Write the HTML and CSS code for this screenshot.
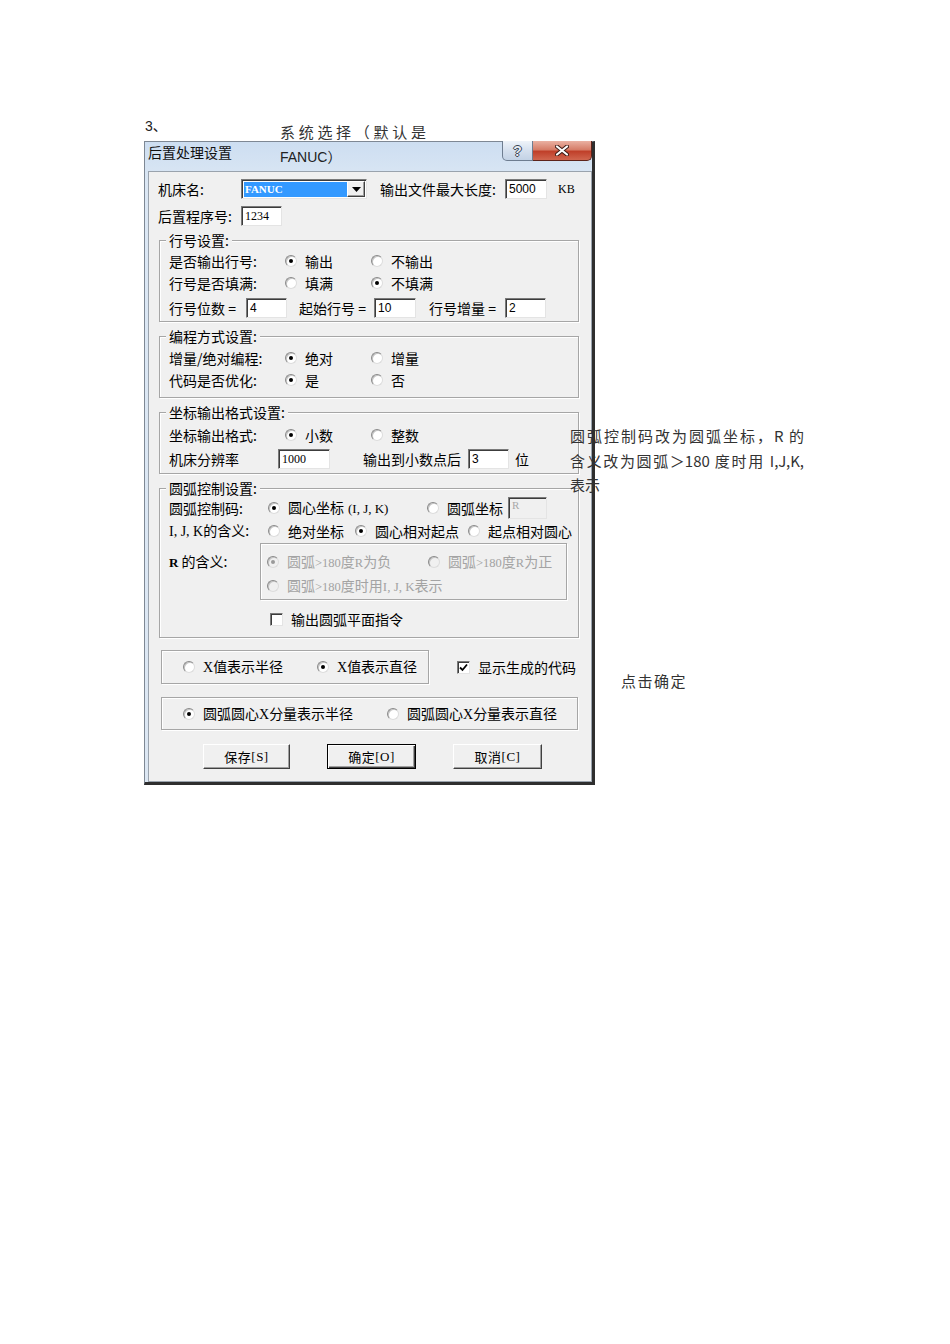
FILE: index.html
```html
<!DOCTYPE html>
<html lang="zh-CN">
<head>
<meta charset="utf-8">
<title>后置处理设置</title>
<link rel="stylesheet" href="styles.css">
</head>
<body>
<div class="doc">
  <div class="intro">
    <span class="num">3、</span>
    <span class="intro-text">系统选择（默认是</span>
  </div>
  <div class="figure">
    <div class="dialog">
      <div class="titlebar">
        <span class="title">后置处理设置</span>
        <div class="caption-btns">
          <span class="cap-help">?</span>
          <span class="cap-close"><svg width="14" height="11" viewBox="0 0 14 11"><path d="M2 1.5 L12 9.5 M12 1.5 L2 9.5" stroke="#3a1a14" stroke-width="4" stroke-linecap="round"/><path d="M2 1.5 L12 9.5 M12 1.5 L2 9.5" stroke="#fff" stroke-width="2.2" stroke-linecap="round"/></svg></span>
        </div>
      </div>
      <div class="client">
        <div class="row row-a">
          <span class="lbl w83">机床名:</span>
          <div class="combo"><span class="combo-sel serif">FANUC</span><span class="combo-btn"><svg width="9" height="5" viewBox="0 0 9 5"><path d="M0 0 H9 L4.5 5 Z" fill="#000"/></svg></span></div>
          <span class="lbl ml13 w125">输出文件最大长度:</span>
          <span class="field w42">5000</span>
          <span class="unit serif">KB</span>
        </div>
        <div class="row row-b">
          <span class="lbl w83">后置程序号:</span>
          <span class="field w41 serif">1234</span>
        </div>

        <div class="group g1">
          <span class="legend">行号设置:</span>
          <div class="row r1">
            <span class="lbl w116">是否输出行号:</span>
            <span class="opt w86"><i class="radio on"></i>输出</span>
            <span class="opt"><i class="radio"></i>不输出</span>
          </div>
          <div class="row r2">
            <span class="lbl w116">行号是否填满:</span>
            <span class="opt w86"><i class="radio"></i>填满</span>
            <span class="opt"><i class="radio on"></i>不填满</span>
          </div>
          <div class="row r3">
            <span class="lbl w77">行号位数 =</span>
            <span class="field w41">4</span>
            <span class="lbl ml12 w75">起始行号 =</span>
            <span class="field w42">10</span>
            <span class="lbl ml13 w76">行号增量 =</span>
            <span class="field w41">2</span>
          </div>
        </div>

        <div class="group g2">
          <span class="legend">编程方式设置:</span>
          <div class="row r1">
            <span class="lbl w116">增量/绝对编程:</span>
            <span class="opt w86"><i class="radio on"></i>绝对</span>
            <span class="opt"><i class="radio"></i>增量</span>
          </div>
          <div class="row r2">
            <span class="lbl w116">代码是否优化:</span>
            <span class="opt w86"><i class="radio on"></i>是</span>
            <span class="opt"><i class="radio"></i>否</span>
          </div>
        </div>

        <div class="group g3">
          <span class="legend">坐标输出格式设置:</span>
          <div class="row r1">
            <span class="lbl w116">坐标输出格式:</span>
            <span class="opt w86"><i class="radio on"></i>小数</span>
            <span class="opt"><i class="radio"></i>整数</span>
          </div>
          <div class="row r2">
            <span class="lbl w109">机床分辨率</span>
            <span class="field w52 serif">1000</span>
            <span class="lbl ml33 w105">输出到小数点后</span>
            <span class="field w41">3</span>
            <span class="lbl ml6">位</span>
          </div>
        </div>

        <div class="group g4">
          <span class="legend">圆弧控制设置:</span>
          <div class="row r1">
            <span class="lbl w99">圆弧控制码:</span>
            <span class="opt w159"><i class="radio on"></i><span>圆心坐标<span class="serif sm paren">(I, J, K)</span></span></span>
            <span class="opt w81"><i class="radio"></i>圆弧坐标</span>
            <span class="field w39 h22 disabled serif">R</span>
          </div>
          <div class="row r2">
            <span class="lbl w99"><span class="serif">I, J, K</span>的含义:</span>
            <span class="opt w87"><i class="radio"></i>绝对坐标</span>
            <span class="opt w113"><i class="radio on"></i>圆心相对起点</span>
            <span class="opt"><i class="radio"></i>起点相对圆心</span>
          </div>
          <div class="rrow">
            <span class="lbl w91 rlabel"><b class="serif">R</b> 的含义:</span>
            <div class="subbox">
              <div class="row">
                <span class="opt w161 dis"><i class="radio on"></i><span>圆弧<span class="sm2">&gt;180</span>度<span class="sm2">R</span>为负</span></span>
                <span class="opt dis"><i class="radio"></i><span>圆弧<span class="sm2">&gt;180</span>度<span class="sm2">R</span>为正</span></span>
              </div>
              <div class="row sub2">
                <span class="opt dis"><i class="radio"></i><span>圆弧<span class="sm2">&gt;180</span>度时用<span class="serif sm">I, J, K</span>表示</span></span>
              </div>
            </div>
          </div>
          <div class="row r4">
            <span class="opt"><i class="check"></i>输出圆弧平面指令</span>
          </div>
        </div>

        <div class="row g5row">
          <div class="box g5">
            <span class="opt w134"><i class="radio"></i><span><span class="serif">X</span>值表示半径</span></span>
            <span class="opt"><i class="radio on"></i><span><span class="serif">X</span>值表示直径</span></span>
          </div>
          <span class="opt ml28"><i class="check on"><svg width="9" height="9" viewBox="0 0 9 9"><path d="M1 4.5 L3.5 7 L8 1.5" fill="none" stroke="#000" stroke-width="1.8"/></svg></i>显示生成的代码</span>
        </div>

        <div class="box g6">
          <span class="opt w204"><i class="radio on"></i><span>圆弧圆心<span class="serif">X</span>分量表示半径</span></span>
          <span class="opt"><i class="radio"></i><span>圆弧圆心<span class="serif">X</span>分量表示直径</span></span>
        </div>

        <div class="buttons">
          <span class="btn">保存<span class="serif">[S]</span></span>
          <span class="btn default">确定<span class="serif">[O]</span></span>
          <span class="btn">取消<span class="serif">[C]</span></span>
        </div>
      </div>
    </div>

    <span class="note-fanuc">FANUC）</span>
    <div class="side-note">
      <span class="jline">圆弧控制码改为圆弧坐标，R 的</span>
      <span class="jline">含义改为圆弧＞180 度时用 I,J,K,</span>
      <span class="line">表示</span>
    </div>
    <span class="confirm-note">点击确定</span>
  </div>
</div>
</body>
</html>
```

FILE: styles.css
```css
* { box-sizing: border-box; }

body {
  margin: 0;
  background: #fff;
  font-family: "Liberation Sans", "Noto Sans CJK SC", sans-serif;
  color: #222;
}

.doc { padding-left: 144px; }

/* document intro line */
.intro {
  display: flex;
  align-items: flex-start;
  height: 141px;
  padding-top: 118px;
}
.num {
  width: 136px;
  padding-left: 1px;
  font-size: 14px;
  line-height: 17px;
}
.intro-text {
  margin-top: 4px;
  font-family: "Noto Sans CJK SC", sans-serif;
  font-size: 15px;
  line-height: 20px;
  letter-spacing: 3.7px;
  color: #333;
}

.figure { position: relative; width: 451px; }

/* dialog window */
.dialog {
  width: 451px;
  background: linear-gradient(#cddef1, #dbe7f4 40px, #dce7f3);
  border: 1px solid #7e8894;
  border-right: 3px solid #2e2e2e;
  border-bottom: 3px solid #2e2e2e;
  font-family: "Noto Sans CJK SC", sans-serif;
  font-size: 14px;
  color: #000;
}

.titlebar {
  display: flex;
  align-items: flex-start;
  height: 29px;
  padding-left: 3px;
}
.title {
  line-height: 20px;
  font-size: 14px;
  color: #111;
}
.caption-btns {
  display: flex;
  margin-left: auto;
  margin-top: -1px;
}
.cap-help {
  width: 31px;
  height: 20px;
  display: flex;
  align-items: center;
  justify-content: center;
  border: 1px solid #6e7d90;
  border-top: none;
  border-radius: 0 0 0 5px;
  background: linear-gradient(#eef3f9, #d5e0ee 50%, #c3d2e5);
  font-family: "Liberation Sans", sans-serif;
  font-weight: bold;
  font-size: 14px;
  color: #e9edf2;
  text-shadow: 1px 0 0 #3b4756, -1px 0 0 #3b4756, 0 1px 0 #3b4756, 0 -1px 0 #3b4756;
}
.cap-close {
  width: 59px;
  height: 20px;
  display: flex;
  align-items: center;
  justify-content: center;
  border: 1px solid #5d231a;
  border-left: none;
  border-top: none;
  border-radius: 0 0 5px 0;
  background: linear-gradient(#eab1a2, #d67d68 45%, #c0402a 55%, #d0664f);
}

.client {
  margin-left: 3px;
  border: 1px solid #9aa3ad;
  background: #f0f0f0;
  padding: 7px 0 12px 9px;
}

.row {
  display: flex;
  align-items: center;
  height: 20px;
  white-space: nowrap;
}
.row-b { margin-top: 7px; }

.lbl { line-height: 20px; flex: none; }
.serif { font-family: "Liberation Serif", serif; }
.sm { font-size: 13px; }
.paren { margin-left: 4px; }
.sm2 { font-family: "Liberation Serif", serif; font-size: 12.5px; }

.w39 { width: 39px; }
.w41 { width: 41px; }
.w42 { width: 42px; }
.w52 { width: 52px; }
.w75 { width: 75px; }
.w76 { width: 76px; }
.w77 { width: 77px; }
.w81 { width: 81px; }
.w83 { width: 83px; }
.w86 { width: 86px; }
.w87 { width: 87px; }
.w91 { width: 91px; }
.w99 { width: 99px; }
.w105 { width: 105px; }
.w109 { width: 109px; }
.w113 { width: 113px; }
.w116 { width: 116px; }
.w125 { width: 125px; }
.w134 { width: 134px; }
.w159 { width: 159px; }
.w161 { width: 161px; }
.w204 { width: 204px; }
.ml6 { margin-left: 6px; }
.ml12 { margin-left: 12px; }
.ml13 { margin-left: 13px; }
.ml28 { margin-left: 28px; }
.ml33 { margin-left: 33px; }

/* text field */
.field {
  flex: none;
  height: 20px;
  background: #fff;
  border: 1px solid;
  border-color: #7a7a7a #e4e4e4 #e4e4e4 #7a7a7a;
  box-shadow: inset 1px 1px 0 #3c3c3c;
  padding-left: 3px;
  font-family: "Liberation Sans", sans-serif;
  font-size: 12px;
  line-height: 18px;
  color: #000;
}
.field.serif { font-family: "Liberation Serif", serif; }
.h22 { height: 22px; line-height: 18px; }
.field.disabled {
  background: #f0f0f0;
  color: #a8a8a8;
  font-size: 11px;
  line-height: 14px;
}
.unit { margin-left: 11px; font-size: 12px; }

/* combo box */
.combo {
  flex: none;
  display: flex;
  width: 126px;
  height: 20px;
  padding: 2px 1px 1px 2px;
  background: #fff;
  border: 1px solid;
  border-color: #7a7a7a #e4e4e4 #e4e4e4 #7a7a7a;
  box-shadow: inset 1px 1px 0 #3c3c3c;
}
.combo-sel {
  flex: 1;
  background: #3399ff;
  color: #fff;
  font-weight: bold;
  font-size: 11px;
  line-height: 15px;
  padding-left: 1px;
}
.combo-btn {
  width: 18px;
  margin-top: -1px;
  display: flex;
  align-items: center;
  justify-content: center;
  background: #f0f0f0;
  border: 1px solid;
  border-color: #fff #404040 #404040 #fff;
  box-shadow: inset -1px -1px 0 #a0a0a0;
}

/* group boxes */
.group {
  margin-left: 1px;
  width: 420px;
  margin-top: 14px;
  padding-left: 9px;
  border: 1px solid #a6a6a6;
  box-shadow: inset 1px 1px 0 #fff, 1px 1px 0 #fff;
}
.legend {
  display: table;
  height: 16px;
  margin: -9px 0 0 -3px;
  padding: 0 3px;
  line-height: 16px;
  background: #f0f0f0;
}
.g1 .r1 { margin-top: 3px; }
.g1 .r2 { margin-top: 2px; }
.g1 .r3 { margin-top: 5px; }
.g1 { padding-bottom: 3px; }

.g2 .r1 { margin-top: 4px; }
.g2 .r2 { margin-top: 2px; }
.g2 { padding-bottom: 7px; }

.g3 .r1 { margin-top: 5px; }
.g3 .r2 { margin-top: 4px; }
.g3 { padding-bottom: 4px; }

.g4 .r1 { margin-top: 1px; height: 22px; }
.g4 .r2 { margin-top: 2px; }
.g4 { padding-bottom: 8px; }
.g4 .r4 { margin-top: 9px; padding-left: 101px; }

.rrow {
  display: flex;
  align-items: flex-start;
  margin-top: 2px;
}
.rlabel { margin-top: 8px; }
.rlabel b { font-weight: bold; font-size: 13px; }
.subbox {
  width: 307px;
  height: 57px;
  padding: 8px 0 0 6px;
  border: 1px solid #a6a6a6;
  box-shadow: inset 1px 1px 0 #fff, 1px 1px 0 #fff;
}
.sub2 { margin-top: 4px; }

/* radio / checkbox options */
.opt {
  flex: none;
  display: flex;
  align-items: center;
  line-height: 20px;
}
.opt.dis { color: #a3a3a3; }
.radio {
  position: relative;
  flex: none;
  width: 12px;
  height: 12px;
  margin-right: 8px;
  border-radius: 50%;
  background: #fff;
  border: 1px solid;
  border-color: #8a8a8a #dcdcdc #dcdcdc #8a8a8a;
  box-shadow: inset 1px 1px 0 #c4c4c4;
}
.radio.on::after {
  content: "";
  position: absolute;
  left: 3px;
  top: 3px;
  width: 4px;
  height: 4px;
  border-radius: 50%;
  background: #000;
}
.dis .radio { background: #f0f0f0; }
.dis .radio.on::after { background: #9a9a9a; }

.check {
  flex: none;
  width: 13px;
  height: 13px;
  margin-right: 8px;
  display: flex;
  align-items: center;
  justify-content: center;
  background: #fff;
  border: 1px solid;
  border-color: #7a7a7a #e4e4e4 #e4e4e4 #7a7a7a;
  box-shadow: inset 1px 1px 0 #3c3c3c;
}

/* bottom boxes */
.g5row {
  height: 34px;
  margin-top: 12px;
  margin-left: 3px;
}
.box {
  display: flex;
  align-items: center;
  padding-left: 21px;
  border: 1px solid #a6a6a6;
  box-shadow: inset 1px 1px 0 #fff, 1px 1px 0 #fff;
}
.g5 { width: 268px; height: 34px; }
.g6 {
  width: 417px;
  height: 33px;
  margin: 13px 0 0 3px;
}

.buttons {
  display: flex;
  gap: 37px;
  margin: 14px 0 0 45px;
}
.btn {
  width: 89px;
  height: 25px;
  display: flex;
  align-items: center;
  justify-content: center;
  background: #f0f0f0;
  border: 1px solid;
  border-color: #fff #404040 #404040 #fff;
  box-shadow: inset -1px -1px 0 #a0a0a0;
  font-size: 13px;
  letter-spacing: 0.5px;
}
.btn:first-child { width: 87px; }
.btn .serif { font-size: 13px; }
.btn.default {
  border: 1px solid #000;
  box-shadow: inset 1px 1px 0 #fff, inset -1px -1px 0 #404040, inset -2px -2px 0 #a0a0a0;
}

/* document notes overlapping the picture */
.note-fanuc {
  position: absolute;
  left: 136px;
  top: 6px;
  font-size: 14px;
  line-height: 20px;
  white-space: nowrap;
  color: #222;
}
.side-note {
  position: absolute;
  left: 426px;
  top: 283px;
  width: 234px;
  font-family: "Noto Sans CJK SC", sans-serif;
  font-size: 15px;
  line-height: 24.5px;
  color: #333;
}
.side-note .jline {
  display: block;
  white-space: nowrap;
  text-align: justify;
  text-align-last: justify;
}
.side-note .line { display: block; }
.confirm-note {
  position: absolute;
  left: 477px;
  top: 530px;
  white-space: nowrap;
  font-family: "Noto Sans CJK SC", sans-serif;
  font-size: 15px;
  line-height: 20px;
  letter-spacing: 1.5px;
  color: #333;
}
```
